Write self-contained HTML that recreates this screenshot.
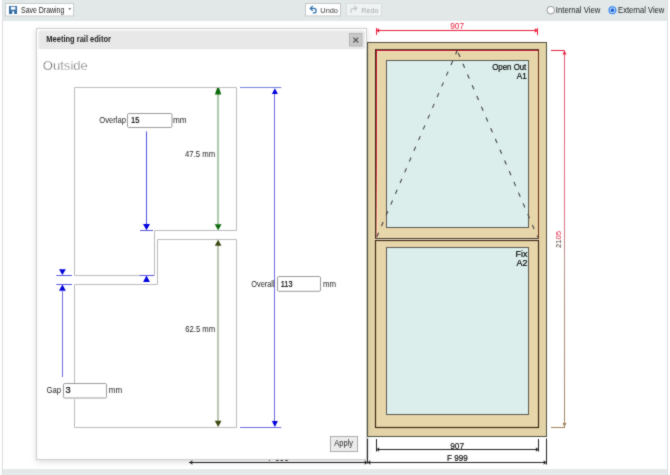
<!DOCTYPE html>
<html><head><meta charset="utf-8">
<style>
html,body{margin:0;padding:0;width:670px;height:475px;overflow:hidden;background:#fff;}
svg{display:block;position:absolute;left:0;top:0;}
text{font-family:"Liberation Sans",sans-serif;}
</style></head>
<body>
<svg width="670" height="475" viewBox="0 0 670 475">
<defs>
  <linearGradient id="dimgrad" x1="0" y1="50" x2="0" y2="430" gradientUnits="userSpaceOnUse">
    <stop offset="0" stop-color="#e45a78"/>
    <stop offset="0.45" stop-color="#d87088"/>
    <stop offset="0.55" stop-color="#b89488"/>
    <stop offset="1" stop-color="#a08464"/>
  </linearGradient>
  <linearGradient id="dimgrad2" x1="0" y1="0" x2="1" y2="0">
    <stop offset="0" stop-color="#3a3024"/>
    <stop offset="0.47" stop-color="#4a3a2c"/>
    <stop offset="0.53" stop-color="#e01838"/>
    <stop offset="1" stop-color="#e01838"/>
  </linearGradient>
  <filter id="shadow" x="-10%" y="-10%" width="120%" height="120%">
    <feGaussianBlur in="SourceAlpha" stdDeviation="3"/>
    <feOffset dx="0" dy="2"/>
    <feComponentTransfer><feFuncA type="linear" slope="0.14"/></feComponentTransfer>
    <feMerge><feMergeNode/><feMergeNode in="SourceGraphic"/></feMerge>
  </filter>
  <linearGradient id="sashred" x1="0" y1="50" x2="0" y2="238" gradientUnits="userSpaceOnUse">
    <stop offset="0" stop-color="#c8102a"/>
    <stop offset="0.6" stop-color="#d03040"/>
    <stop offset="1" stop-color="#e09080"/>
  </linearGradient>
  <filter id="soft" x="0" y="0" width="670" height="475" filterUnits="userSpaceOnUse" color-interpolation-filters="sRGB">
    <feConvolveMatrix order="3" kernelMatrix="1 2 1 2 16 2 1 2 1" divisor="28" edgeMode="duplicate"/>
  </filter>
</defs>
<g filter="url(#soft)">

<!-- page frame -->
<rect x="0" y="0" width="670" height="475" fill="#fff"/>
<rect x="3" y="0" width="664" height="21" fill="#e2e8e8"/>
<rect x="3" y="469" width="664" height="6" fill="#e4e9ea"/>
<rect x="2" y="0" width="1" height="475" fill="#dcdedf"/>
<rect x="667" y="0" width="1" height="475" fill="#dcdedf"/>

<!-- toolbar: Save Drawing -->
<rect x="5.5" y="3.5" width="68" height="12.5" fill="#fff" stroke="#c9cdcd"/>
<g>
  <rect x="9" y="6" width="8" height="8" fill="#2f6ea3"/>
  <rect x="10.8" y="6.8" width="4.6" height="2.9" fill="#fff"/>
  <rect x="12.2" y="11.3" width="2" height="2.7" fill="#fff"/>
</g>
<text id="t_save" x="21.00" y="12.8" font-size="8.2" fill="#222" textLength="43.34" lengthAdjust="spacingAndGlyphs">Save Drawing</text>
<path d="M68.3,8.3 h3 l-1.5,1.8z" fill="#555"/>

<!-- Undo / Redo -->
<rect x="305.5" y="3.5" width="35" height="12.5" fill="#fff" stroke="#c3c7c7"/>
<path d="M312.8,6 L310.3,8.4 L312.8,10.8" fill="none" stroke="#3274ad" stroke-width="1.3"/>
<path d="M310.6,8.4 H313.9 a2.25,2.25 0 0 1 0,4.5 H312.8" fill="none" stroke="#3274ad" stroke-width="1.3"/>
<text id="t_undo" x="320.34" y="12.9" font-size="7.9" fill="#3a3a3a" textLength="17.66" lengthAdjust="spacingAndGlyphs">Undo</text>
<rect x="346.5" y="3.5" width="35" height="12.5" fill="#f0f3f3" stroke="#d9dddd"/>
<path d="M354.3,6 L356.8,8.3 L354.3,10.6" fill="none" stroke="#c4c8c8" stroke-width="1.3"/>
<path d="M356.5,8.3 H353.2 a2.2,2.2 0 0 0 -2.2,2.2 V13" fill="none" stroke="#c4c8c8" stroke-width="1.3"/>
<text id="t_redo" x="361.21" y="12.8" font-size="7.9" fill="#a4a8a8" textLength="17.20" lengthAdjust="spacingAndGlyphs">Redo</text>

<!-- radios -->
<circle cx="550.7" cy="10.2" r="3.8" fill="#fff" stroke="#8a8a8a" stroke-width="0.9"/>
<text id="t_int" x="555.80" y="12.6" font-size="8.2" fill="#222" textLength="44.53" lengthAdjust="spacingAndGlyphs">Internal View</text>
<circle cx="612.4" cy="10.2" r="4.4" fill="#9cc8f6"/>
<circle cx="612.4" cy="10.2" r="3.7" fill="#2b7de6"/>
<circle cx="612.4" cy="10.2" r="2.7" fill="#fff"/>
<circle cx="612.4" cy="10.2" r="2.0" fill="#1c64d8"/>
<text id="t_ext" x="618.10" y="12.6" font-size="8.2" fill="#222" textLength="46.22" lengthAdjust="spacingAndGlyphs">External View</text>

<!-- ================= window drawing ================= -->
<g fill="#e8203c">
  <rect x="376" y="30" width="162" height="1"/>
  <rect x="376" y="28" width="1" height="7"/>
  <rect x="537" y="28" width="1" height="7"/>
  <path d="M376,30.5 l3.2,-2.3 v4.6z"/>
  <path d="M538,30.5 l-3.2,-2.3 v4.6z"/>
</g>
<text id="t_907t" x="450.19" y="29.3" font-size="8.6" fill="#e8203c" textLength="13.87" lengthAdjust="spacingAndGlyphs">907</text>

<g>
  <rect x="551" y="50" width="14" height="1" fill="#e8203c"/>
  <rect x="564" y="50" width="1" height="377" fill="url(#dimgrad)"/>
  <rect x="551" y="427" width="14" height="1" fill="#a08058"/>
  <path d="M564.5,50.5 l-2,4 h4z" fill="#e8203c"/>
  <path d="M564.5,427 l-2,-4 h4z" fill="#a08058"/>
</g>
<text id="t_2105" transform="translate(561.4,239.4) rotate(-90)" font-size="7.7" text-anchor="middle" fill="url(#dimgrad2)" textLength="17" lengthAdjust="spacingAndGlyphs">2105</text>

<!-- frame -->
<rect x="367.5" y="42.5" width="179" height="394" fill="#e3d4a8" stroke="#4e5040" stroke-width="1"/>
<!-- upper sash -->
<rect x="375" y="49" width="164" height="190" fill="#e8d6ab"/>
<rect x="377" y="51" width="160" height="1" fill="#f6e2bc"/>
<rect x="377" y="51" width="1" height="187" fill="#f6e2bc"/>
<rect x="375" y="49" width="164" height="1" fill="#4e4a34"/>
<rect x="376" y="50" width="162" height="1" fill="#c8102a"/>
<rect x="375" y="49" width="1" height="190" fill="#3a2a18"/>
<rect x="376" y="50" width="1" height="188" fill="url(#sashred)"/>
<rect x="538" y="49" width="1" height="190" fill="#6a2a14"/>
<rect x="375" y="238" width="164" height="1" fill="#4a3c2c"/>
<rect x="375" y="239" width="164" height="1" fill="#f2ead4"/>
<rect x="386.5" y="60.5" width="142" height="167" fill="#dceeeb" stroke="#5a5850" stroke-width="1"/>
<!-- lower sash -->
<rect x="375.5" y="240.5" width="163" height="187" fill="#e8d6ab" stroke="#3a2410" stroke-width="1.15"/>
<rect x="386.5" y="247.5" width="142" height="167" fill="#dceeeb" stroke="#5a5850" stroke-width="1"/>
<path d="M457.2,50.5 L376.8,237" fill="none" stroke="#3a3a3a" stroke-width="1.05" stroke-dasharray="4.4,7.3" stroke-dashoffset="0.4"/>
<path d="M457.2,50.5 L537.6,237" fill="none" stroke="#3a3a3a" stroke-width="1.05" stroke-dasharray="4.4,7.3" stroke-dashoffset="9.0"/>
<text id="t_oo" x="492.27" y="69.6" font-size="8.6" fill="#000" stroke="#000" stroke-width="0.18" textLength="34.01" lengthAdjust="spacingAndGlyphs">Open Out</text>
<text id="t_a1" x="516.83" y="78.5" font-size="8.6" fill="#000" stroke="#000" stroke-width="0.18" textLength="9.94" lengthAdjust="spacingAndGlyphs">A1</text>
<text id="t_fix" x="515.51" y="256.8" font-size="8.6" fill="#000" stroke="#000" stroke-width="0.18" textLength="11.90" lengthAdjust="spacingAndGlyphs">Fix</text>
<text id="t_a2" x="516.43" y="266.3" font-size="8.6" fill="#000" stroke="#000" stroke-width="0.18" textLength="10.96" lengthAdjust="spacingAndGlyphs">A2</text>

<!-- bottom dims -->
<g fill="#222">
  <rect x="376" y="439" width="1" height="12.5"/>
  <rect x="538" y="439" width="1" height="12.5"/>
  <rect x="376" y="449" width="162.5" height="1"/>
  <rect x="367" y="438.5" width="1" height="25"/>
  <rect x="546" y="438.5" width="1" height="26"/>
  <rect x="189" y="462" width="357.5" height="1"/>
  <path d="M376.5,449.5 l2.6,-2.2 v4.4z"/>
  <path d="M538.5,449.5 l-2.6,-2.2 v4.4z"/>
  <path d="M367.5,462.5 l2.8,-2.2 v4.4z"/>
  <path d="M367.5,462.5 l-2.8,-2.2 v4.4z"/>
  <path d="M546.5,462.5 l-2.8,-2.2 v4.4z"/>
  <path d="M189.5,462.5 l2.8,-2.2 v4.4z"/>
</g>
<text id="t_907b" x="450.19" y="448.9" font-size="8.6" fill="#222" stroke="#000" stroke-width="0.18" textLength="13.87" lengthAdjust="spacingAndGlyphs">907</text>
<text id="t_f999" x="447.02" y="460.8" font-size="8.6" fill="#000" stroke="#000" stroke-width="0.18" textLength="20.66" lengthAdjust="spacingAndGlyphs">F 999</text>
<text id="t_f999h" x="268.16" y="461.2" font-size="8.6" fill="#000" textLength="20.74" lengthAdjust="spacingAndGlyphs">F 999</text>

<!-- ================= dialog ================= -->
<g filter="url(#shadow)">
  <rect x="36.5" y="28.5" width="330" height="431" fill="#fff" stroke="#cfcfcf" stroke-width="1"/>
</g>
<rect x="38.5" y="30.5" width="326.5" height="18.7" rx="2" fill="#e8e8e8"/>
<text id="t_meet" x="46.30" y="42.3" font-size="8.3" font-weight="bold" fill="#222" textLength="64.66" lengthAdjust="spacingAndGlyphs">Meeting rail editor</text>
<rect x="349.5" y="33.5" width="12.5" height="12.5" fill="#c9c9c9" stroke="#b3b3b3" stroke-width="1"/>
<path d="M353.4,37.6 L358.3,42.5 M358.3,37.6 L353.4,42.5" stroke="#555" stroke-width="1.3"/>

<text id="t_out" x="42.76" y="69.9" font-size="12.4" fill="#555" stroke="#fff" stroke-width="0.38" textLength="45.13" lengthAdjust="spacingAndGlyphs">Outside</text>

<path d="M74.5,87.5 H236.5 V230.5 H154.5 V275.5 H74.5 Z" fill="none" stroke="#bcbcbc" stroke-width="1"/>
<path d="M236.5,239.5 H157.5 V284.5 H74.5 V427.5 H236.5 Z" fill="none" stroke="#bcbcbc" stroke-width="1"/>

<text id="t_ovl" x="99.20" y="123.2" font-size="8.4" fill="#222" textLength="26.73" lengthAdjust="spacingAndGlyphs">Overlap</text>
<rect x="127.5" y="113.5" width="44.5" height="14" rx="1.2" fill="#fff" stroke="#9a9a9a"/>
<text id="t_15" x="130.95" y="123.2" font-size="8.4" fill="#000" stroke="#000" stroke-width="0.18" textLength="8.40" lengthAdjust="spacingAndGlyphs">15</text>
<text id="t_mm1" x="173.05" y="123.2" font-size="8.4" fill="#222" textLength="13.62" lengthAdjust="spacingAndGlyphs">mm</text>
<line x1="146.5" y1="131.5" x2="146.5" y2="225" stroke="#5050e0" stroke-width="1"/>
<path d="M143,224 h7 l-3.5,6.2z" fill="#0000dd"/>
<line x1="140" y1="230.5" x2="153" y2="230.5" stroke="#5858e0"/>
<path d="M143.1,281.9 h6.8 l-3.4,-6.3z" fill="#0000dd"/>
<line x1="139.6" y1="275.5" x2="154" y2="275.5" stroke="#5858e0"/>

<path d="M59,269.3 h6.8 l-3.4,5.8z" fill="#0000dd"/>
<line x1="56.3" y1="275.5" x2="72" y2="275.5" stroke="#5858e0"/>
<path d="M59,290.8 h6.8 l-3.4,-6.2z" fill="#0000dd"/>
<line x1="56.3" y1="284.5" x2="72" y2="284.5" stroke="#5858e0"/>
<line x1="62.5" y1="290" x2="62.5" y2="377" stroke="#6a6ae0"/>
<rect x="74" y="383" width="1" height="16" fill="#fff"/>
<text id="t_gap" x="46.54" y="392.9" font-size="8.4" fill="#222" textLength="14.51" lengthAdjust="spacingAndGlyphs">Gap</text>
<rect x="63.5" y="383.5" width="43" height="14.5" rx="1.2" fill="#fff" stroke="#9a9a9a"/>
<text id="t_3" x="65.62" y="392.9" font-size="8.4" fill="#000" stroke="#000" stroke-width="0.18" textLength="5.18" lengthAdjust="spacingAndGlyphs">3</text>
<text id="t_mm3" x="108.86" y="392.9" font-size="8.4" fill="#222" textLength="13.32" lengthAdjust="spacingAndGlyphs">mm</text>

<line x1="218" y1="93" x2="218" y2="225" stroke="#5c945c" stroke-width="1"/>
<path d="M214.9,94.6 h6.4 l-2.2,-6.6 h-2z" fill="#0b6b0b"/>
<path d="M214.7,224.2 h6.9 l-3.45,6z" fill="#0b6b0b"/>
<text id="t_475" x="185.08" y="156.8" font-size="8.4" fill="#222" textLength="30.01" lengthAdjust="spacingAndGlyphs">47.5 mm</text>
<line x1="218" y1="245" x2="218" y2="421" stroke="#7c8a68" stroke-width="1"/>
<path d="M214.8,245.8 h6.7 l-3.35,-6z" fill="#3b4a14"/>
<path d="M214.8,420.8 h6.7 l-3.35,6.1z" fill="#3b4a14"/>
<text id="t_625" x="185.24" y="331.8" font-size="8.4" fill="#222" textLength="29.83" lengthAdjust="spacingAndGlyphs">62.5 mm</text>

<line x1="240" y1="87.5" x2="281.3" y2="87.5" stroke="#7080d8" stroke-width="1.2"/>
<line x1="240" y1="427.5" x2="281.3" y2="427.5" stroke="#6a6ae0" stroke-width="1"/>
<line x1="274.5" y1="93" x2="274.5" y2="422" stroke="#6a6ae0" stroke-width="1"/>
<path d="M271.9,94.1 h6 l-3,-5.8z" fill="#0000dd"/>
<path d="M271.9,421 h6 l-3,6z" fill="#0000dd"/>
<text id="t_ovr" x="251.22" y="286.7" font-size="8.4" fill="#222" textLength="23.43" lengthAdjust="spacingAndGlyphs">Overall</text>
<rect x="277.5" y="276.5" width="43" height="14.8" rx="1.2" fill="#fff" stroke="#9a9a9a"/>
<text id="t_113" x="280.83" y="286.7" font-size="8.4" fill="#000" stroke="#000" stroke-width="0.18" textLength="11.68" lengthAdjust="spacingAndGlyphs">113</text>
<text id="t_mm2" x="322.97" y="286.7" font-size="8.4" fill="#222" textLength="13.12" lengthAdjust="spacingAndGlyphs">mm</text>

<rect x="330.5" y="436.5" width="27" height="15" fill="#ececec" stroke="#acacac" stroke-width="1"/>
<text id="t_apply" x="334.26" y="446.3" font-size="8.4" fill="#222" textLength="18.67" lengthAdjust="spacingAndGlyphs">Apply</text>
</g>
</svg>
</body></html>
